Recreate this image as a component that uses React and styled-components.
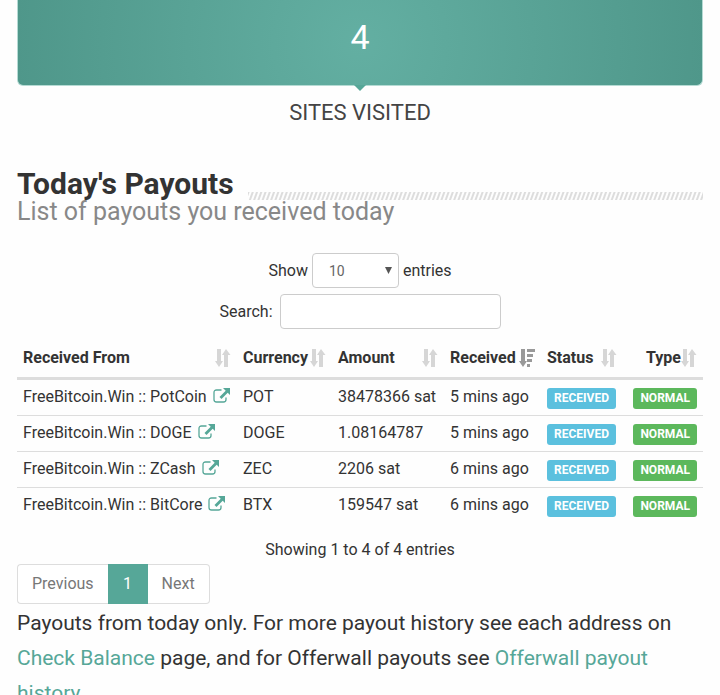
import React from 'react';
import styled, { createGlobalStyle } from 'styled-components';

const payouts = [
  { from: 'PotCoin', currency: 'POT', amount: '38478366 sat', received: '5 mins ago' },
  { from: 'DOGE', currency: 'DOGE', amount: '1.08164787', received: '5 mins ago' },
  { from: 'ZCash', currency: 'ZEC', amount: '2206 sat', received: '6 mins ago' },
  { from: 'BitCore', currency: 'BTX', amount: '159547 sat', received: '6 mins ago' },
];

const columns = [
  { name: 'Received From', width: 220 },
  { name: 'Currency', width: 95 },
  { name: 'Amount', width: 112 },
  { name: 'Received', width: 97, sorted: true },
  { name: 'Status', width: 82 },
  { name: 'Type', width: 80 },
];

const SortIcon = ({ active }) => (
  <StyledSort viewBox="0 0 17 18" $active={active} aria-hidden="true">
    <path d="M3 0h4v12h2l-4 6-4-6h2z" />
    {active ? (
      <path d="M9 0h8v3H9zM9 5h6v3H9zM9 10h5v3H9zM9 15h3v3H9z" />
    ) : (
      <path d="M10 18h4V6h2.500l-4.500-6-4 6h2z" />
    )}
  </StyledSort>
);

const ExternalIcon = () => (
  <StyledExternal viewBox="0 0 17 15" aria-hidden="true">
    <path
      d="M8.500 2H3.500Q1 2 1 4.500V11.500Q1 14 3.500 14H10.500Q13 14 13 11.500V9.500"
      fill="none"
      stroke="currentColor"
      strokeWidth="1.300"
    />
    <path d="M10 0h7v7l-2.300-2.300-6.200 6.300L6.500 9l6.200-6.300z" fill="currentColor" />
  </StyledExternal>
);

const App = () => {
  return (
    <Page>
      <GlobalStyle />
      <Counter>4</Counter>
      <CounterTitle>SITES VISITED</CounterTitle>

      <Heading>
        <h2>Today's Payouts</h2>
        <Stripes />
      </Heading>
      <Subtitle>List of payouts you received today</Subtitle>

      <Controls>
        <label>
          Show
          <Select defaultValue="10">
            <option>10</option>
            <option>25</option>
            <option>50</option>
            <option>100</option>
          </Select>
          entries
        </label>
        <label>
          Search:
          <Search type="search" />
        </label>
      </Controls>

      <Table>
        <thead>
          <tr>
            {columns.map(({ name, width, sorted }) => (
              <Th key={name} $width={width}>
                {name}
                <SortIcon active={sorted} />
              </Th>
            ))}
          </tr>
        </thead>
        <tbody>
          {payouts.map(({ from, currency, amount, received }) => (
            <tr key={from}>
              <td>
                FreeBitcoin.Win :: {from}{' '}
                <a href="#site" aria-label={`Open ${from}`}>
                  <ExternalIcon />
                </a>
              </td>
              <td>{currency}</td>
              <td>{amount}</td>
              <td>{received}</td>
              <td>
                <Badge $color="#5bc0de">RECEIVED</Badge>
              </td>
              <td>
                <Badge $color="#5cb85c">NORMAL</Badge>
              </td>
            </tr>
          ))}
        </tbody>
      </Table>

      <Info>Showing 1 to 4 of 4 entries</Info>
      <Pagination aria-label="Payout pages">
        <PageButton>Previous</PageButton>
        <PageButton $active>1</PageButton>
        <PageButton>Next</PageButton>
      </Pagination>

      <Note>
        Payouts from today only. For more payout history see each address on{' '}
        <a href="#balance">Check Balance</a> page, and for Offerwall payouts see{' '}
        <a href="#offerwall">Offerwall payout history</a>.
      </Note>
    </Page>
  );
};

const GlobalStyle = createGlobalStyle`
  * {
    box-sizing: border-box;
  }

  body {
    margin: 0;
    background: #fefefe;
    color: #333;
    font: 16px/24px Roboto, sans-serif;
  }

  a {
    color: #56a798;
    text-decoration: none;
  }
`;

const Page = styled.main`
  padding: 0 17px;
`;

const Counter = styled.div`
  position: relative;
  padding: 13px 0 24px;
  border: solid #b5dbd4;
  border-width: 0 1px 1px;
  border-radius: 0 0 6px 6px;
  background: radial-gradient(circle, #63afa2 0%, #4f978a 100%);
  color: #fff;
  font-size: 34px;
  line-height: 48px;
  text-align: center;

  &::after {
    content: '';
    position: absolute;
    top: 100%;
    left: 50%;
    margin-left: -6px;
    border: 6px solid transparent;
    border-top-color: #56a798;
    border-bottom: 0;
  }
`;

const CounterTitle = styled.div`
  margin-top: 11px;
  color: #444;
  font-size: 22px;
  line-height: 32px;
  text-align: center;
`;

const Heading = styled.div`
  display: flex;
  align-items: flex-end;
  gap: 14px;
  margin-top: 39px;

  h2 {
    margin: 0;
    font-size: 30px;
    line-height: 32px;
    font-weight: 700;
  }
`;

const Stripes = styled.div`
  flex: 1;
  height: 8px;
  background: repeating-linear-gradient(
    110deg,
    #ddd 0 1px,
    #fefefe 2px 3px,
    #ddd 4px
  );
`;

const Subtitle = styled.p`
  margin: 0;
  color: #888;
  font-size: 25px;
  line-height: 24px;
`;

const Controls = styled.div`
  display: flex;
  flex-direction: column;
  align-items: center;
  gap: 6px;
  margin-top: 29px;

  label {
    display: flex;
    align-items: center;
    gap: 4px;
  }
`;

const Select = styled.select`
  width: 87px;
  height: 35px;
  padding: 0 16px;
  border: 1px solid #ccc;
  border-radius: 4px;
  appearance: none;
  background: #fff
    url("data:image/svg+xml,%3Csvg xmlns='http://www.w3.org/2000/svg' viewBox='0 0 7 7'%3E%3Cpath d='M0 0h7L3.500 7z' fill='%23555'/%3E%3C/svg%3E")
    no-repeat right 6px center / 7px 7px;
  color: #666;
  font: 14px Roboto, sans-serif;
`;

const Search = styled.input`
  width: 221px;
  height: 35px;
  margin-left: 3px;
  padding: 0 12px;
  border: 1px solid #ccc;
  border-radius: 4px;
  background: #fff;
  font: 14px Roboto, sans-serif;
`;

const Table = styled.table`
  width: 100%;
  margin-top: 7px;
  border-collapse: collapse;
  white-space: nowrap;

  td {
    padding: 5px 6px 6px;
    border-bottom: 1px solid #ddd;
  }

  tr:last-child td {
    border-bottom: 0;
  }

  th:last-child,
  td:last-child {
    text-align: right;
  }
`;

const Th = styled.th`
  position: relative;
  width: ${({ $width }) => $width}px;
  padding: 10px 22px 7px 6px;
  border-bottom: 3px solid #ddd;
  text-align: left;
`;

const StyledSort = styled.svg`
  position: absolute;
  right: 6px;
  bottom: 10px;
  width: 17px;
  height: 18px;
  fill: ${({ $active }) => ($active ? '#999' : '#d6d6d6')};
`;

const StyledExternal = styled.svg`
  width: 17px;
  height: 15px;
  margin-left: 2px;
  vertical-align: -1px;
`;

const Badge = styled.span`
  display: inline-block;
  padding: 0 7px;
  border-radius: 3px;
  background: ${({ $color }) => $color};
  color: #fff;
  font-size: 12px;
  line-height: 21px;
  font-weight: 700;
`;

const Info = styled.div`
  margin-top: 15px;
  text-align: center;
`;

const Pagination = styled.nav`
  display: flex;
  margin-top: 2px;
`;

const PageButton = styled.button`
  min-width: 40px;
  height: 40px;
  padding: 0 14px 2px;
  border: 1px solid ${({ $active }) => ($active ? '#56a798' : '#ddd')};
  background: ${({ $active }) => ($active ? '#56a798' : '#fff')};
  color: ${({ $active }) => ($active ? '#fff' : '#777')};
  font: 16px Roboto, sans-serif;

  &:first-child {
    border-right: 0;
    border-radius: 4px 0 0 4px;
  }

  &:last-child {
    border-left: 0;
    border-radius: 0 4px 4px 0;
  }
`;

const Note = styled.p`
  margin: 2px 0 0;
  font-size: 21px;
  line-height: 35px;
`;

export default App;
